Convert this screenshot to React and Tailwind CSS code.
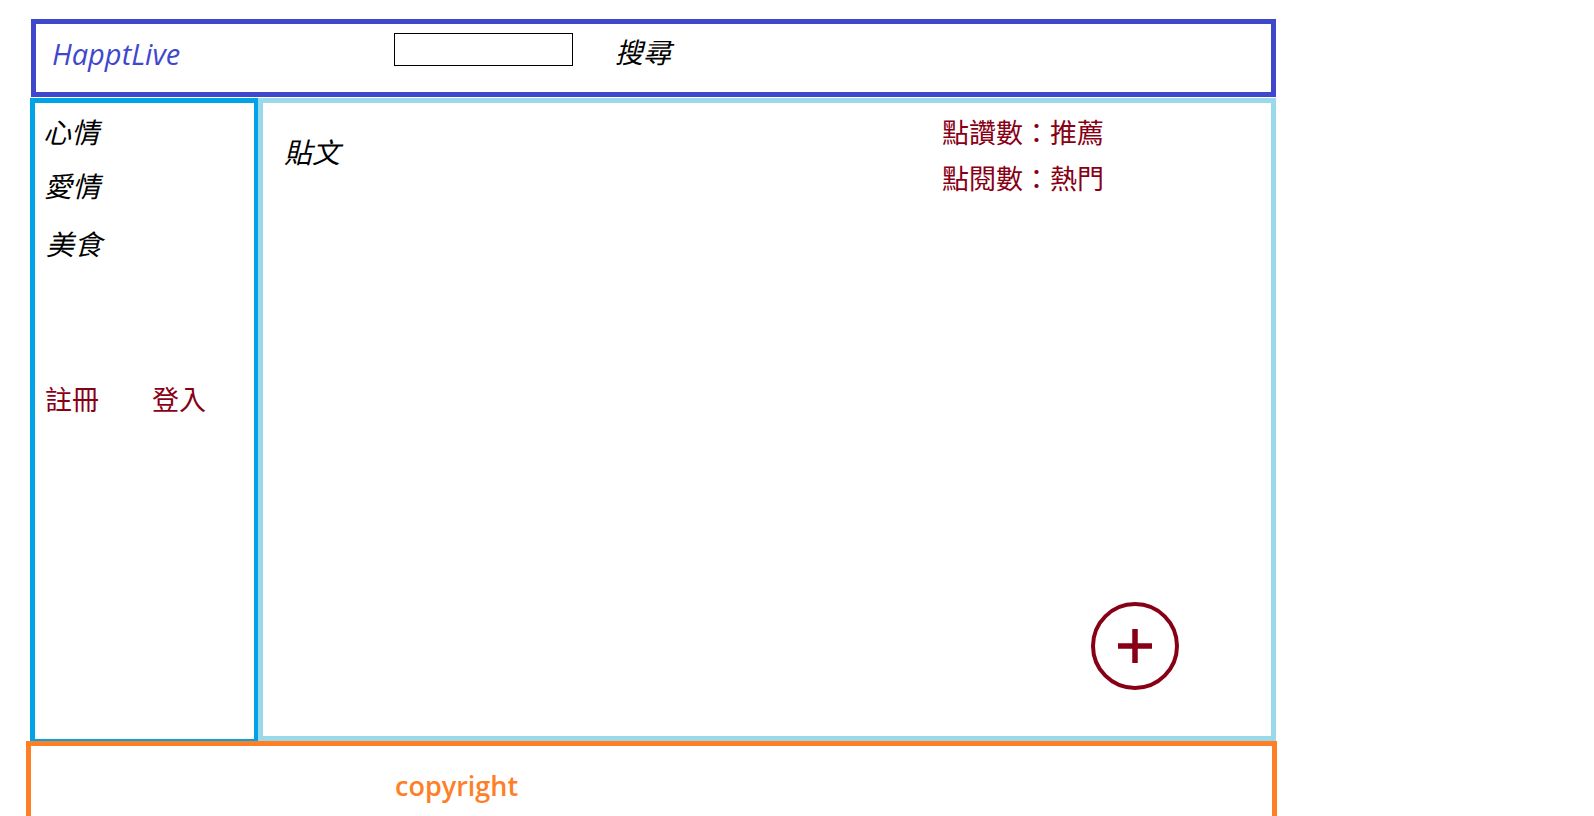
import React from 'react';

const cjk = "font-['Noto_Sans_CJK_TC','Noto_Sans_CJK_SC',sans-serif]";

function Header() {
  return (
    <div className="ml-[31px] mt-[19px] w-[1245px] h-[78px] border-[5px] border-[#3f48cc] flex items-start">
      <div className="w-[358px] pl-[16px] mt-[15px] text-[29px] leading-none italic font-normal text-[#3f48cc] font-['Open_Sans',sans-serif]">
        HapptLive
      </div>
      <input className="mt-[9px] w-[179px] h-[33px] border border-black outline-none" />
      <div className={`ml-[42px] mt-[13px] text-[28px] leading-none italic text-black ${cjk}`}>搜尋</div>
    </div>
  );
}

function Sidebar() {
  return (
    <div className={`ml-[30px] w-[228px] h-[643px] border-l-[5px] border-t-[5px] border-r-[4px] border-b-[2px] border-[#00a2e8] ${cjk}`}>
      <div className="pl-[8px] text-[28px] leading-none italic text-black">
        <div className="mt-[14px]">心情</div>
        <div className="mt-[26px] ml-[1px]">愛情</div>
        <div className="mt-[30px] ml-[3px]">美食</div>
      </div>
      <div className="mt-[128px] pl-[10px] flex gap-[53px] text-[27px] leading-none text-[#880015]">
        <span>註冊</span>
        <span>登入</span>
      </div>
    </div>
  );
}

function AddButton() {
  return (
    <button className="absolute right-[92px] bottom-[46px] w-[88px] h-[88px] rounded-full border-[4px] border-[#880015] flex items-center justify-center">
      <svg width="36" height="36" viewBox="0 0 36 36">
        <path d="M18 1v34M1 18h34" stroke="#880015" strokeWidth="5.5" fill="none" />
      </svg>
    </button>
  );
}

function Main() {
  return (
    <div className={`relative w-[1018px] h-[643px] border-[5px] border-[#99d9ea] pl-[21px] flex items-start ${cjk}`}>
      <div className="w-[658px] mt-[34px] text-[28px] leading-none italic text-black">貼文</div>
      <div className="mt-[15px] text-[27px] leading-none text-[#880015]">
        <div>點讚數：推薦</div>
        <div className="mt-[19px]">點閱數：熱門</div>
      </div>
      <AddButton />
    </div>
  );
}

function Footer() {
  return (
    <div className="ml-[26px] w-[1251px] h-[75px] border-t-[5px] border-l-[5px] border-r-[5px] border-[#ff7f27] pl-[364px]">
      <div className="mt-[26px] text-[27px] leading-none font-semibold text-[#ff7f27] font-['Open_Sans',sans-serif]">
        copyright
      </div>
    </div>
  );
}

export default function App() {
  return (
    <div className="w-[1594px] h-[816px] overflow-hidden bg-white flex flex-col">
      <Header />
      <div className="flex mt-[1px]">
        <Sidebar />
        <Main />
      </div>
      <Footer />
    </div>
  );
}
